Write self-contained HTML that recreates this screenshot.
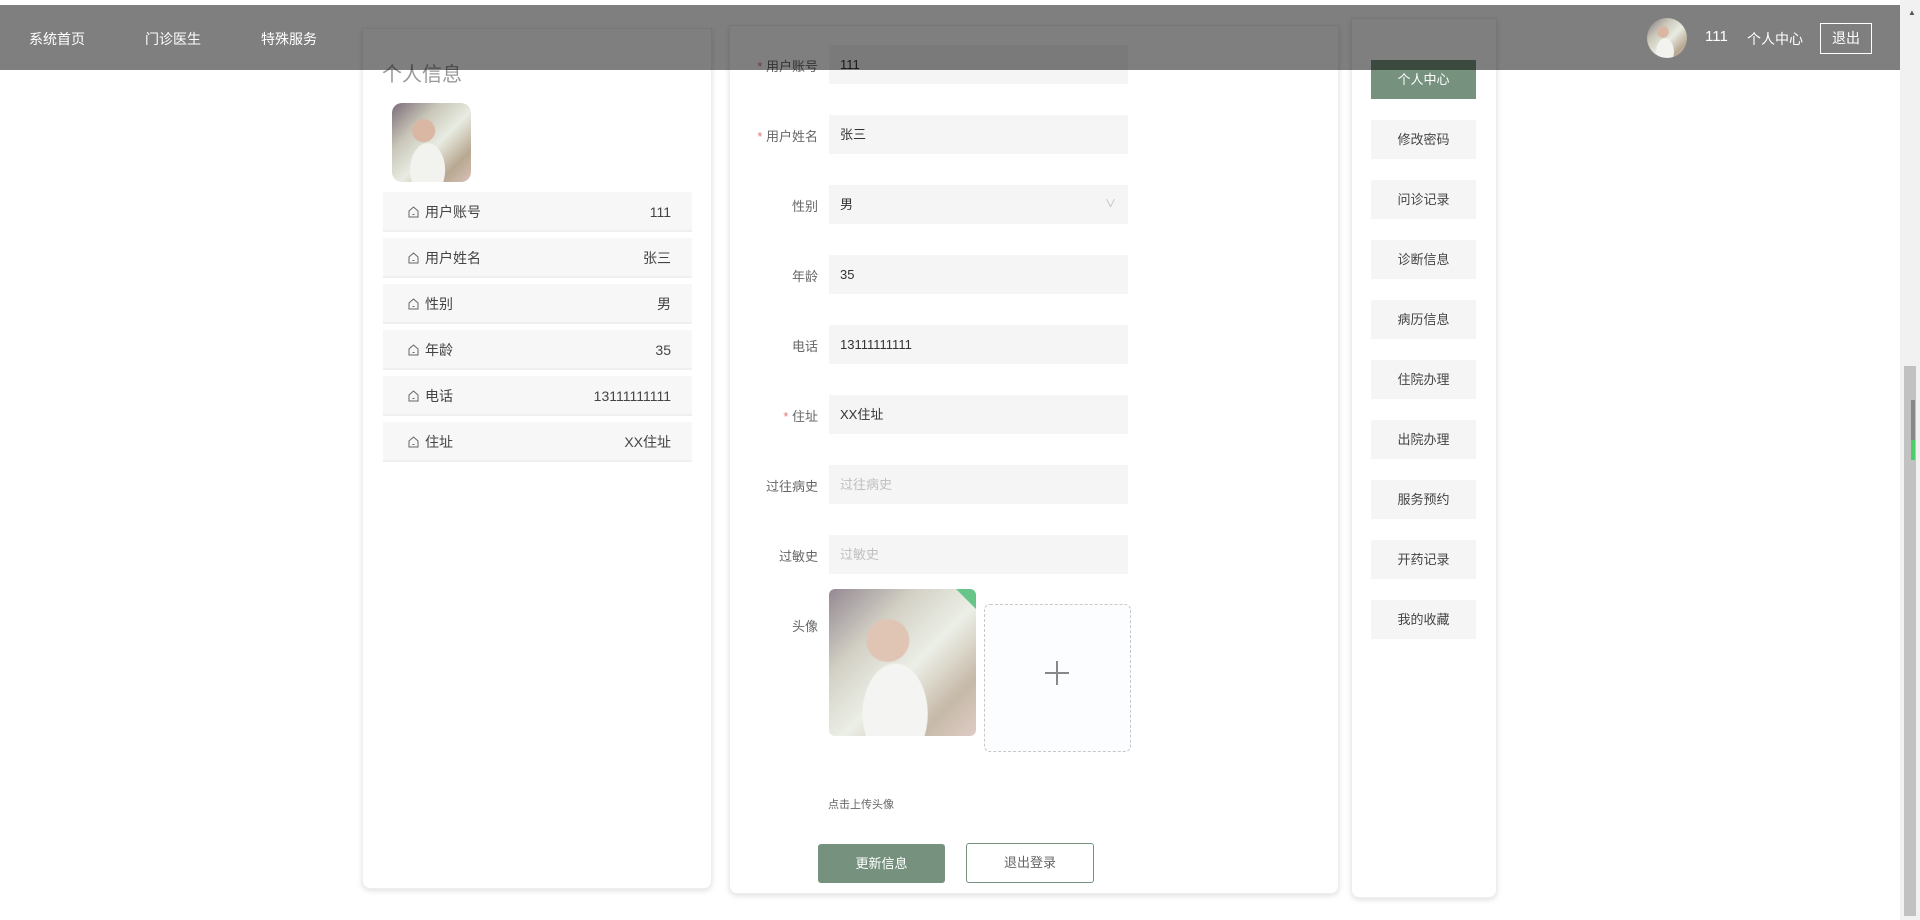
<!DOCTYPE html>
<html><head><meta charset="utf-8"><style>
*{margin:0;padding:0;box-sizing:border-box}
body{width:1920px;height:920px;overflow:hidden;background:#fff;font-family:"Liberation Sans","Noto Sans CJK SC",sans-serif;position:relative;color:#333}
.abs{position:absolute}
.hdr{position:absolute;left:0;top:5px;width:1900px;height:65px;background:rgba(0,0,0,.5);z-index:10}
.nav{position:absolute;top:28px;color:#fff;font-size:14px}
.panel{position:absolute;background:#fff;border:1px solid #eee;border-radius:0 0 8px 8px;box-shadow:0 2px 6px rgba(0,0,0,.12)}
.row{position:absolute;left:383px;width:309px;height:40px;background:#f7f7f7;border-bottom:2px solid #efefef;font-size:14px;line-height:40px;color:#444}
.row .ic{position:absolute;left:25px;top:14px;width:11px;height:12px}
.row .l{position:absolute;left:42px}
.row .v{position:absolute;right:21px}
.lab{position:absolute;width:100px;left:718px;text-align:right;font-size:13px;color:#666}
.lab b{color:#e07a7a;font-weight:normal}
.inp{position:absolute;left:829px;width:299px;height:39px;background:#f5f5f5;font-size:13px;line-height:39px;padding-left:11px;color:#333}
.menu{position:absolute;left:1371px;width:105px;height:39px;background:#f5f5f5;font-size:13px;line-height:39px;text-align:center;color:#444}
.photo{background:radial-gradient(circle at 40% 35%,#d9b7a3 0 16%,transparent 17%),radial-gradient(ellipse at 45% 85%,#f2f2ef 0 28%,transparent 29%),linear-gradient(135deg,#7a6c78 0%,#c9c6b8 30%,#e8ece2 55%,#b8a892 80%,#d8c0b8 100%)}
</style></head><body>
<div class="hdr">
<div class="nav" style="left:29px;top:24px">系统首页</div>
<div class="nav" style="left:145px;top:24px">门诊医生</div>
<div class="nav" style="left:261px;top:24px">特殊服务</div>
<div class="abs photo" style="left:1647px;top:13px;width:40px;height:40px;border-radius:50%"></div>
<div class="nav" style="left:1705px;top:23px;font-size:15px">111</div>
<div class="nav" style="left:1747px;top:24px;font-size:14px">个人中心</div>
<div class="abs" style="left:1820px;top:18px;width:52px;height:31px;border:1px solid #fff;color:#fff;font-size:14px;text-align:center;line-height:29px">退出</div>
</div>

<div class="panel" style="left:362px;top:28px;width:350px;height:861px"></div>
<div class="abs" style="left:382px;top:58px;font-size:20px;color:#999">个人信息</div>
<div class="abs photo" style="left:392px;top:103px;width:79px;height:79px;border-radius:10px"></div>

<div class="row" style="top:192px"><svg class="ic" viewBox="0 0 11 12"><path d="M1 5L5.5 1 10 5V11H1Z M4.5 8.5h2" fill="none" stroke="#666"/></svg><span class="l">用户账号</span><span class="v">111</span></div>
<div class="row" style="top:238px"><svg class="ic" viewBox="0 0 11 12"><path d="M1 5L5.5 1 10 5V11H1Z M4.5 8.5h2" fill="none" stroke="#666"/></svg><span class="l">用户姓名</span><span class="v">张三</span></div>
<div class="row" style="top:284px"><svg class="ic" viewBox="0 0 11 12"><path d="M1 5L5.5 1 10 5V11H1Z M4.5 8.5h2" fill="none" stroke="#666"/></svg><span class="l">性别</span><span class="v">男</span></div>
<div class="row" style="top:330px"><svg class="ic" viewBox="0 0 11 12"><path d="M1 5L5.5 1 10 5V11H1Z M4.5 8.5h2" fill="none" stroke="#666"/></svg><span class="l">年龄</span><span class="v">35</span></div>
<div class="row" style="top:376px"><svg class="ic" viewBox="0 0 11 12"><path d="M1 5L5.5 1 10 5V11H1Z M4.5 8.5h2" fill="none" stroke="#666"/></svg><span class="l">电话</span><span class="v">13111111111</span></div>
<div class="row" style="top:422px"><svg class="ic" viewBox="0 0 11 12"><path d="M1 5L5.5 1 10 5V11H1Z M4.5 8.5h2" fill="none" stroke="#666"/></svg><span class="l">住址</span><span class="v">XX住址</span></div>

<div class="panel" style="left:729px;top:25px;width:610px;height:869px"></div>
<div class="lab" style="top:56px"><b>* </b>用户账号</div><div class="inp" style="top:45px">111</div>
<div class="lab" style="top:126px"><b>* </b>用户姓名</div><div class="inp" style="top:115px">张三</div>
<div class="lab" style="top:196px">性别</div><div class="inp" style="top:185px">男<span style="position:absolute;right:12px;color:#bbb;font-size:11px">∨</span></div>
<div class="lab" style="top:266px">年龄</div><div class="inp" style="top:255px">35</div>
<div class="lab" style="top:336px">电话</div><div class="inp" style="top:325px">13111111111</div>
<div class="lab" style="top:406px"><b>* </b>住址</div><div class="inp" style="top:395px">XX住址</div>
<div class="lab" style="top:476px">过往病史</div><div class="inp" style="top:465px;color:#c0c0c0">过往病史</div>
<div class="lab" style="top:546px">过敏史</div><div class="inp" style="top:535px;color:#c0c0c0">过敏史</div>
<div class="lab" style="top:616px">头像</div>
<div class="abs photo" style="left:829px;top:589px;width:147px;height:147px;border-radius:6px;opacity:.8"></div>
<div class="abs" style="left:956px;top:589px;width:0;height:0;border-left:20px solid transparent;border-top:20px solid #67c58a;border-top-right-radius:6px"></div>
<div class="abs" style="left:984px;top:604px;width:147px;height:148px;border:1px dashed #c8c8c8;border-radius:6px;background:#fbfdff"></div>
<div class="abs" style="left:1045px;top:672px;width:24px;height:1.5px;background:#888"></div>
<div class="abs" style="left:1056px;top:661px;width:1.5px;height:24px;background:#888"></div>
<div class="abs" style="left:828px;top:796px;font-size:11px;color:#666">点击上传头像</div>
<div class="abs" style="left:818px;top:844px;width:127px;height:39px;background:#76927f;border-radius:3px;color:#fff;font-size:13px;text-align:center;line-height:39px">更新信息</div>
<div class="abs" style="left:966px;top:843px;width:128px;height:40px;border:1px solid #76927f;border-radius:3px;color:#666;font-size:13px;text-align:center;line-height:38px">退出登录</div>

<div class="panel" style="left:1351px;top:18px;width:146px;height:880px"></div>
<div class="menu" style="top:60px;background:#76927f;color:#fff">个人中心</div>
<div class="menu" style="top:120px">修改密码</div>
<div class="menu" style="top:180px">问诊记录</div>
<div class="menu" style="top:240px">诊断信息</div>
<div class="menu" style="top:300px">病历信息</div>
<div class="menu" style="top:360px">住院办理</div>
<div class="menu" style="top:420px">出院办理</div>
<div class="menu" style="top:480px">服务预约</div>
<div class="menu" style="top:540px">开药记录</div>
<div class="menu" style="top:600px">我的收藏</div>

<div class="abs" style="left:1900px;top:0;width:20px;height:920px;background:#f1f1f1"></div>
<div class="abs" style="left:1908px;top:8px;font-size:8px;color:#555">▲</div>
<div class="abs" style="left:1904px;top:366px;width:12px;height:550px;background:#c1c1c1"></div>
<div class="abs" style="left:1911px;top:400px;width:4px;height:60px;background:#888"></div>
<div class="abs" style="left:1911px;top:440px;width:4px;height:20px;background:#4ccd6a"></div>
</body></html>
